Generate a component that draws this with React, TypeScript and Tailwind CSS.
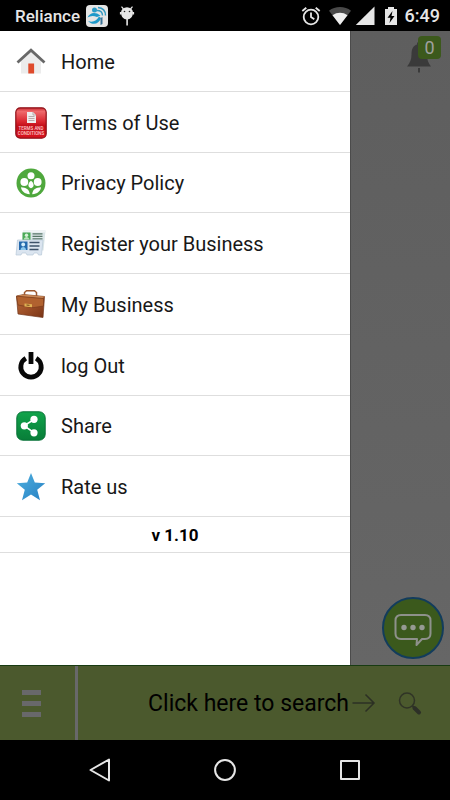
import React from "react";

function HomeIcon() {
  return (
    <svg viewBox="0 0 30 30" className="size-[30px]" aria-hidden="true">
      <path d="M5 14 15 5l10 9v12.500H5z" fill="#ececec" />
      <rect x="12.300" y="16.500" width="5.800" height="10" fill="#df4b2c" />
      <path d="M1.500 15.500 15 3.200l13.500 12.300" fill="none" stroke="#686868" strokeWidth="2.800" />
    </svg>
  );
}

function TermsIcon() {
  return (
    <svg viewBox="0 0 32 32" className="size-8" aria-hidden="true">
      <defs>
        <linearGradient id="terms" x1="0" y1="0" x2="0" y2="1">
          <stop offset="0" stopColor="#c92a31" />
          <stop offset=".12" stopColor="#ef6a6c" />
          <stop offset=".45" stopColor="#da2730" />
          <stop offset=".6" stopColor="#c30d18" />
          <stop offset="1" stopColor="#d9131e" />
        </linearGradient>
      </defs>
      <rect x=".8" y=".8" width="30.400" height="30.400" rx="4.500" fill="url(#terms)" stroke="#8e1118" strokeWidth="1.200" />
      <path d="M12 5h6l3 3v8h-9z" fill="#eee" />
      <path d="M18 5v3h3M13.500 9.500h6M13.500 11.500h6M13.500 13.500h6" fill="none" stroke="#a99" strokeWidth=".8" />
      <text x="16" y="22.500" textAnchor="middle" fontSize="4.500" fontWeight="500" fill="#ffc9c9" fontFamily="Roboto, sans-serif">TERMS AND</text>
      <text x="16" y="27.800" textAnchor="middle" fontSize="4.500" fontWeight="500" fill="#ffc9c9" fontFamily="Roboto, sans-serif">CONDITIONS</text>
    </svg>
  );
}

function PrivacyIcon() {
  return (
    <svg viewBox="0 0 30 30" className="size-[30px]" aria-hidden="true">
      <circle cx="15" cy="15" r="14.500" fill="#4fa83d" />
      <g fill="#fff">
        <circle cx="15" cy="7.800" r="3.500" />
        <circle cx="8.300" cy="14" r="3.900" />
        <circle cx="21.700" cy="14" r="3.900" />
        <path d="M13.800 26.200C8.500 26 5.500 23 5 19.200c5 .2 8.200 1.800 8.800 7zM16.200 26.200c5.300-.2 8.300-3.200 8.800-7-5 .2-8.200 1.800-8.800 7z" />
        <path d="M15 12.800c1.800 1.200 2.600 2.700 2.600 4.400 0 1.300-1 2.300-2.600 3-1.600-.7-2.600-1.700-2.600-3 0-1.700.8-3.200 2.600-4.400z" />
      </g>
    </svg>
  );
}

function CardsIcon() {
  return (
    <svg viewBox="0 0 32 32" className="size-8" aria-hidden="true">
      <path d="M8 2.500h22.500l-2 20H6z" fill="#dbe6e8" />
      <path d="M8 2.500h22.500v2H8z" fill="#f1f5f6" />
      <rect x="7.500" y="4.500" width="8" height="8" fill="#4baa58" />
      <circle cx="11.500" cy="7.200" r="1.700" fill="#d8f1d9" />
      <path d="M8.800 11.500c0-3.500 5.500-3.500 5.500 0z" fill="#b9e3bb" />
      <path d="M17.500 5.800h10M17.500 8.300h10M17.500 10.800h10" stroke="#587668" strokeWidth="1.200" />
      <path d="M2.500 12h25.500l-1.500 15h-3l-1-2h-3.500l-1 2h-6l-1-2H7l-1 2H1z" fill="#dbe5f0" stroke="#b9c8d8" strokeWidth=".7" />
      <rect x="4" y="13.500" width="8.500" height="8.500" fill="#2469ad" />
      <circle cx="8.200" cy="16.500" r="1.900" fill="#d5eefb" />
      <path d="M5.500 22c0-4 5.500-4 5.500 0z" fill="#8dc8ed" />
      <path d="M14.500 14.500h10M14.500 18h10M14.500 21.500h9" stroke="#3c5169" strokeWidth="1.400" />
    </svg>
  );
}

function BriefcaseIcon() {
  return (
    <svg viewBox="0 0 32 32" className="size-8" aria-hidden="true">
      <defs>
        <linearGradient id="leather" x1="0" y1="0" x2="1" y2="1">
          <stop offset="0" stopColor="#b66a38" />
          <stop offset=".5" stopColor="#9e5028" />
          <stop offset="1" stopColor="#783315" />
        </linearGradient>
      </defs>
      <path d="M9.500 6.500V3.500l2-1.800h8l2 1.800V7" fill="none" stroke="#9d5931" strokeWidth="1.500" />
      <path d="m1.500 7 7-1.500 21 2L28 28.500 3 25z" fill="url(#leather)" stroke="#71371d" strokeWidth=".7" />
      <path d="m1.500 7 7-1.500 21 2-2.500 2z" fill="#c98755" />
      <path d="m1.500 7.200 27 2.300v7.500l-10.500 1.700-15-2.700z" fill="#b1622f" stroke="#793b1b" strokeWidth=".7" />
      <path d="m9.500 14.500 7.500.7v3l-7.500-.8z" fill="#e0b255" />
      <path d="m11.500 16 3 .3" stroke="#704217" />
    </svg>
  );
}

function PowerIcon() {
  return (
    <svg viewBox="0 0 30 30" className="size-[30px]" aria-hidden="true">
      <path d="M9.800 7.200A10.200 10.200 0 1 0 20.200 7.200" fill="none" stroke="#080808" strokeWidth="4.800" />
      <path d="M12.600 1h4.800v12h-4.800z" fill="#080808" />
    </svg>
  );
}

function ShareIcon() {
  return (
    <svg viewBox="0 0 30 30" className="size-[30px]" aria-hidden="true">
      <defs>
        <linearGradient id="share" x1="0" y1="0" x2="0" y2="1">
          <stop offset="0" stopColor="#11a44b" />
          <stop offset="1" stopColor="#087d38" />
        </linearGradient>
      </defs>
      <rect x=".8" y=".8" width="28.400" height="28.400" rx="6" fill="url(#share)" stroke="#087237" />
      <path d="m18 8.500-10 6.200 10 7" fill="none" stroke="#fff" strokeWidth="1.600" />
      <g fill="#fff"><circle cx="18" cy="8.300" r="3.600" /><circle cx="8.300" cy="14.800" r="3.600" /><circle cx="18" cy="21.800" r="3.600" /></g>
    </svg>
  );
}

function StarIcon() {
  return (
    <svg viewBox="0 0 30 30" className="size-[30px]" aria-hidden="true">
      <defs>
        <linearGradient id="star" x1="0" y1="0" x2="1" y2="1">
          <stop offset="0" stopColor="#4fb0df" />
          <stop offset="1" stopColor="#2680c3" />
        </linearGradient>
      </defs>
      <path d="m15 1 3.800 9.600 10.400.6-8 6.500 2.800 10.500-9-5.800-9 5.800 2.800-10.500-8-6.500 10.400-.6z" fill="url(#star)" />
    </svg>
  );
}

const items = [
  { label: "Home", Icon: HomeIcon },
  { label: "Terms of Use", Icon: TermsIcon },
  { label: "Privacy Policy", Icon: PrivacyIcon },
  { label: "Register your Business", Icon: CardsIcon },
  { label: "My Business", Icon: BriefcaseIcon },
  { label: "log Out", Icon: PowerIcon },
  { label: "Share", Icon: ShareIcon },
  { label: "Rate us", Icon: StarIcon },
];

function StatusBar() {
  return (
    <header className="flex h-[31px] items-center bg-black pl-[15px] pr-[10px] text-[#e6e6e6]">
      <span className="text-[17px] font-medium leading-8">Reliance</span>
      <svg viewBox="0 0 22 22" className="ml-[6px] size-[22px]" aria-hidden="true">
        <rect width="22" height="22" rx="4" fill="#e5e5e5" />
        <circle cx="8.500" cy="5" r="2.500" fill="#299bc6" />
        <path d="M1.500 12.500C4 7.500 9 6.500 14.500 10.500L11 12c-4-2-7-1-9.500.5zM2 16c5 2 9-.5 11-4.500l2 1.500c-2 6-8 8-13 3z" fill="#1d98c9" />
        <path d="M11 5.500c4 0 5.500 2 5.500 5M12 2.500c5 .5 7.500 3.500 7.500 8" fill="none" stroke="#329ac2" strokeWidth="1.400" />
        <path d="m14.500 13 2-1v7l-2 1z" fill="#3a7296" />
      </svg>
      <svg viewBox="0 0 16 22" className="ml-[11px] h-[22px] w-4" fill="#e6e6e6" aria-hidden="true">
        <path d="M2 7.500a6 5.200 0 0 1 12 0C14 11.500 11.500 14.500 8 14.500S2 11.500 2 7.500z" />
        <path d="m4.500 4-2-2.300M11.500 4l2-2.300M1.500 7v2.500M14.500 7v2.500" stroke="#e6e6e6" strokeWidth="1.200" />
        <rect x="7.300" y="14" width="1.600" height="6.500" />
        <circle cx="5.500" cy="6.500" r=".8" fill="#222" /><circle cx="10.500" cy="6.500" r=".8" fill="#222" />
      </svg>
      <div className="ml-auto flex items-center">
        <svg viewBox="0 0 20 20" className="size-5" fill="none" stroke="#e6e6e6" strokeWidth="1.800" aria-hidden="true">
          <circle cx="10" cy="11" r="7.300" /><path d="M10 6.500V11l3.300 2.200M1.300 5l4-3.300M18.700 5l-4-3.300" />
        </svg>
        <svg viewBox="0 0 22 20" className="ml-2 h-5 w-[22px]" aria-hidden="true">
          <path d="M0 4.800C6-.2 16-.2 22 4.800L11 19z" fill="#494949" />
          <path d="M3.500 9.300C8 6 14 6 18.500 9.300L11 19z" fill="#eee" />
        </svg>
        <svg viewBox="0 0 20 20" className="ml-1 size-5" aria-hidden="true"><path d="M19.500.500V19H.800z" fill="#e6e6e6" /></svg>
        <svg viewBox="0 0 14 20" className="ml-[9px] h-5 w-[14px]" aria-hidden="true">
          <path d="M1 3h3V1h6v2h3v16H1z" fill="#e6e6e6" />
          <path d="m8.500 5-5 6.800h3L5.500 17l5-7h-3z" fill="#000" />
        </svg>
        <span className="ml-[7px] text-lg font-medium leading-8">6:49</span>
      </div>
    </header>
  );
}

export default function App() {
  return (
    <div className="flex min-h-screen flex-col bg-black font-[Roboto,sans-serif]">
      <StatusBar />
      <main className="flex flex-1">
        <nav aria-label="Main menu" className="w-[350px] bg-white">
          <ul className="grid h-[486px] grid-rows-8">
            {items.map(({ label, Icon }) => (
              <li key={label} className="border-b border-[#dedede]">
                <button className="flex h-full w-full items-center pt-0.5 text-left text-xl text-[#181818]">
                  <span className="flex w-[61px] justify-center"><Icon /></span>
                  {label}
                </button>
              </li>
            ))}
          </ul>
          <p className="border-b border-[#dedede] pt-0.5 text-center text-[17px] font-bold leading-[33px] text-black">v 1.10</p>
        </nav>
        <section className="flex flex-1 flex-col items-end justify-between border-l border-[#4b4b4b] bg-linear-to-b from-[#5e5e5e] to-[#666666] pt-[5px] pr-[6px] pb-[6px]">
          <button aria-label="Notifications" className="relative mr-[3px] h-10 w-9">
            <svg viewBox="0 0 36 40" className="h-10 w-9" aria-hidden="true">
              <path d="M2 30.500c3-4 4.500-7 4.500-12 0-6 2-9 5.500-10V6.500h4v2c4 1 6 4 6 10 0 5 1 8 4 12z" fill="#3a3a3a" />
              <path d="M14 32v4.500" stroke="#3a3a3a" strokeWidth="2" />
            </svg>
            <span className="absolute top-0 right-0 flex h-[23px] w-[23px] items-center justify-center rounded bg-[#3c591c] text-lg text-[#a0a0a0]">0</span>
          </button>
          <button aria-label="Chat" className="flex size-[62px] items-center justify-center rounded-full border-2 border-[#123c5c] bg-[#3b591c] pt-1">
            <svg viewBox="0 0 40 34" className="h-[34px] w-10" aria-hidden="true">
              <path d="M8 2h24q5.500 0 5.500 5.500v13q0 5.500-5.500 5.500h-3l-5.500 6 .500-6H8q-5.500 0-5.500-5.500v-13Q2.500 2 8 2z" fill="none" stroke="#8e918b" strokeWidth="2" strokeLinejoin="round" />
              <g fill="#969a93"><circle cx="11" cy="14.500" r="2.700" /><circle cx="20" cy="14.500" r="2.700" /><circle cx="29" cy="14.500" r="2.700" /></g>
            </svg>
          </button>
        </section>
      </main>
      <div className="flex h-[75px] border-t border-[#183b12] bg-[#4b592d]">
        <button aria-label="Open menu" className="flex w-[78px] flex-col justify-center gap-[6px] border-r-[3px] border-[#68686a] pl-[22px]">
          <span className="h-[5px] w-[19px] bg-[#68686a]" />
          <span className="h-[5px] w-[19px] bg-[#68686a]" />
          <span className="h-[5px] w-[19px] bg-[#68686a]" />
        </button>
        <button className="flex flex-1 items-center justify-end pt-0.5 pr-7 text-[23px] text-black">
          Click here to search
          <svg viewBox="0 0 24 24" className="ml-[3px] size-6" fill="none" stroke="#2c3024" strokeWidth="1.500" aria-hidden="true"><path d="M.500 11H22M13.500 2.500 22 11l-8.500 8.500" /></svg>
          <svg viewBox="0 0 24 24" className="ml-[22px] size-6" fill="none" aria-hidden="true">
            <circle cx="9" cy="8.500" r="7.500" stroke="#303426" strokeWidth="1.500" /><path d="m14.500 14 3 3" stroke="#303426" strokeWidth="2" /><path d="m16.500 16 4.500 4.500" stroke="#2d3027" strokeWidth="4" strokeLinecap="round" />
          </svg>
        </button>
      </div>
      <footer className="flex h-[60px] items-center justify-between bg-black px-[89px]">
        <button aria-label="Back"><svg viewBox="0 0 22 24" className="h-6 w-[22px]" fill="none" stroke="#e6e6e6" strokeWidth="2" strokeLinejoin="round"><path d="M20 1.500v21L1.500 12z" /></svg></button>
        <button aria-label="Home screen"><svg viewBox="0 0 22 22" className="size-[22px]" fill="none" stroke="#e6e6e6" strokeWidth="2"><circle cx="11" cy="11" r="9.900" /></svg></button>
        <button aria-label="Recent apps"><svg viewBox="0 0 22 22" className="size-[22px]" fill="none" stroke="#e6e6e6" strokeWidth="2" strokeLinejoin="round"><rect x="2" y="2" width="18" height="18" /></svg></button>
      </footer>
    </div>
  );
}
